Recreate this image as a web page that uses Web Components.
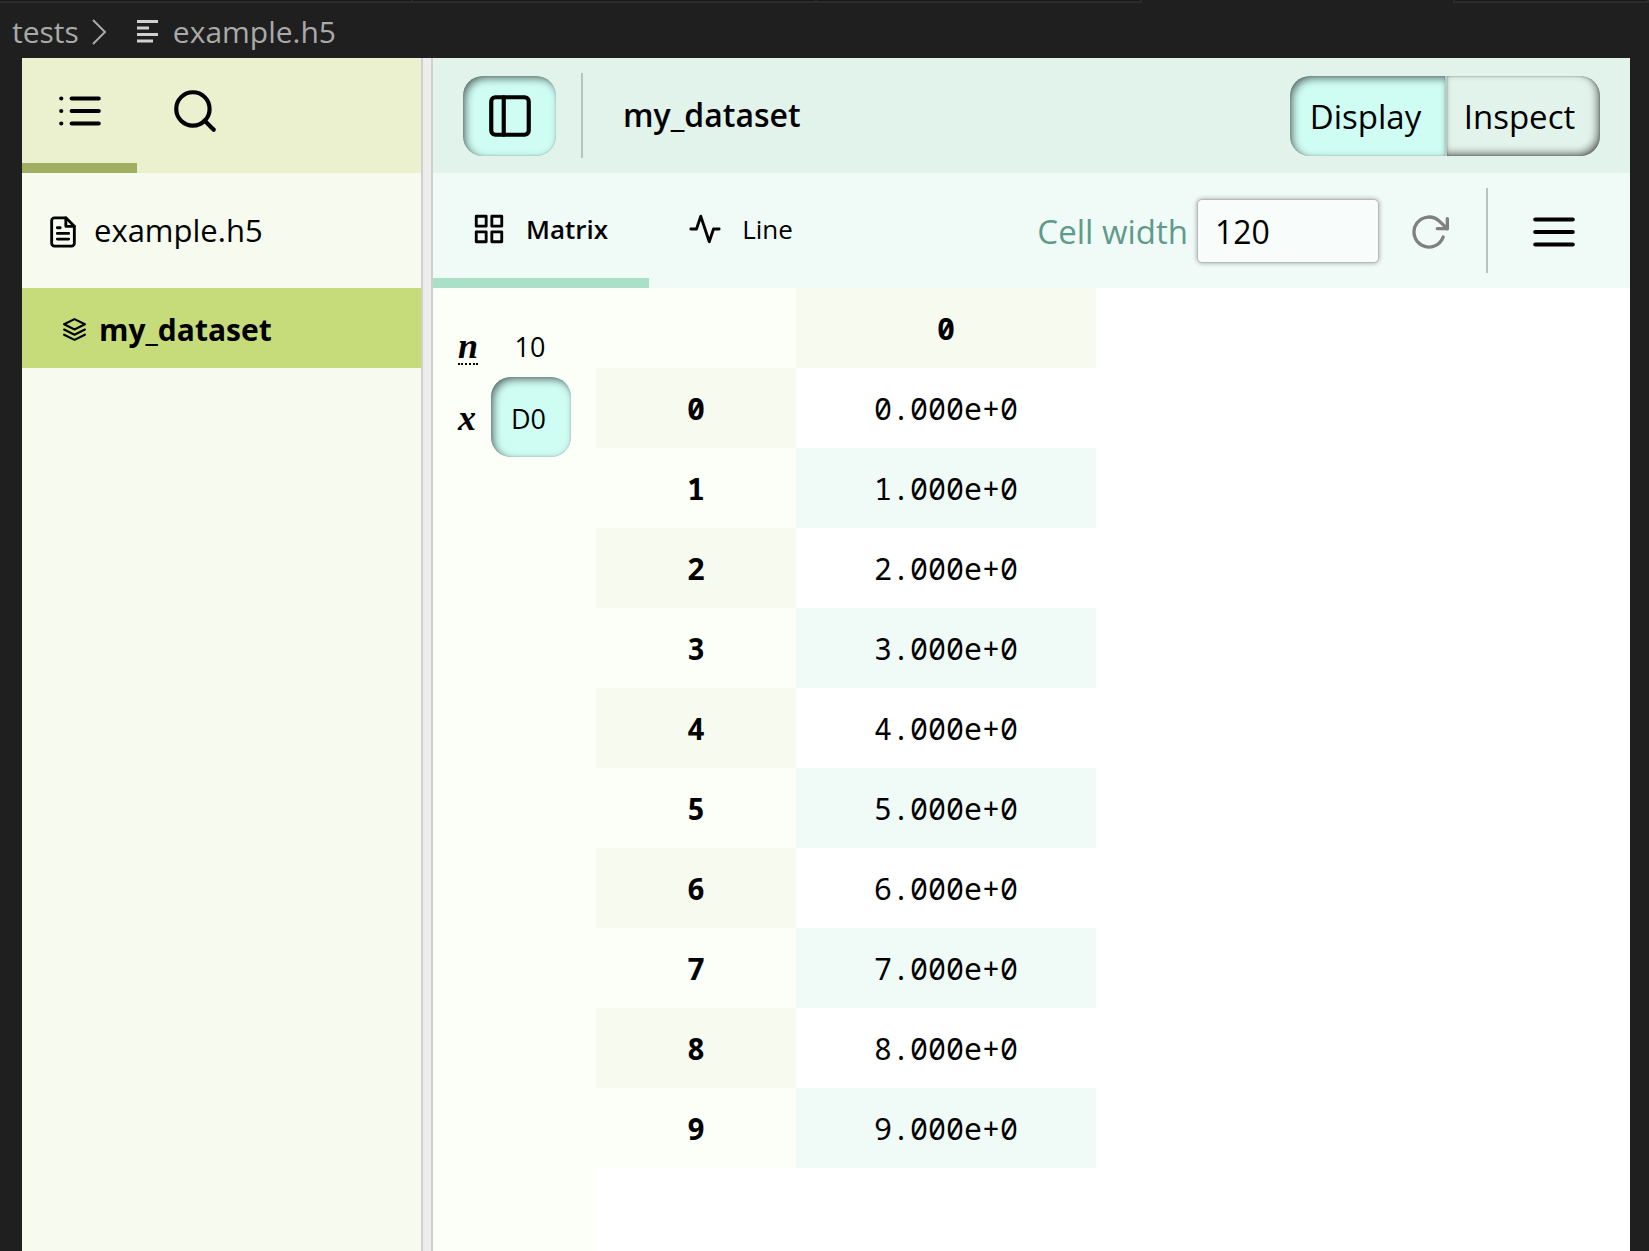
<!DOCTYPE html>
<html lang="en">
<head>
<meta charset="utf-8">
<meta name="viewport" content="width=device-width, initial-scale=1">
<title>example.h5</title>
<style>
html, body { margin: 0; height: 100%; }
body { background: #1f1f1f; color: #000; font-family: "Open Sans", "Noto Sans", sans-serif; font-size: 32px; }
</style>
</head>
<body>
<h5-app></h5-app>
<script>
const RESET = `
  *, *::before, *::after { box-sizing: border-box; }
  button, input { font: inherit; color: inherit; margin: 0; }
  button { border: 0; padding: 0; background: none; cursor: pointer; }
  a { color: inherit; text-decoration: none; }
`;

function define(name, css, html) {
  const template = document.createElement('template');
  template.innerHTML = `<style>${RESET}${css}</style>${html}`;
  customElements.define(name, class extends HTMLElement {
    constructor() {
      super();
      this.attachShadow({ mode: 'open' }).append(template.content.cloneNode(true));
    }
  });
}

/* Stroke icons on a 24-unit grid */
const ICONS = {
  list: '<path d="M8 6h13M8 12h13M8 18h13M3 6h.01M3 12h.01M3 18h.01"/>',
  search: '<circle cx="11" cy="11" r="8"/><path d="M21 21l-4.350-4.350"/>',
  file: '<path d="M14 2H6a2 2 0 0 0-2 2v16a2 2 0 0 0 2 2h12a2 2 0 0 0 2-2V8z"/><path d="M14 2v6h6M16 13H8M16 17H8M10 9H8"/>',
  layers: '<path d="M12 2L2 7l10 5 10-5z"/><path d="M2 17l10 5 10-5M2 12l10 5 10-5"/>',
  sidebar: '<rect x="3" y="3" width="18" height="18" rx="2"/><path d="M9 3v18"/>',
  grid: '<path d="M3 3h7v7H3zM14 3h7v7h-7zM14 14h7v7h-7zM3 14h7v7H3z"/>',
  activity: '<path d="M22 12h-4l-3 9L9 3l-3 9H2"/>',
  refresh: '<path d="M23 4v6h-6"/><path d="M20.490 15a9 9 0 1 1-2.120-9.360L23 10"/>',
  menu: '<path d="M3 12h18M3 6h18M3 18h18"/>',
};
customElements.define('h5-icon', class extends HTMLElement {
  connectedCallback() {
    const size = this.getAttribute('size');
    const root = this.shadowRoot || this.attachShadow({ mode: 'open' });
    root.innerHTML = `<style>:host{display:block;flex:none}svg{display:block}</style>
      <svg width="${size}" height="${size}" viewBox="0 0 24 24" fill="none" stroke="currentColor" stroke-width="2"
      stroke-linecap="round" stroke-linejoin="round" aria-hidden="true">${ICONS[this.getAttribute('name')]}</svg>`;
  }
});

define('h5-breadcrumbs', `
  :host { display: block; height: 58px; color: #a9a9a9; font-size: 30px; line-height: 40px; }
  .strip { display: flex; height: 3px; }
  .strip span { background: #181818; border: solid #2b2b2b; border-width: 0 2px 2px 0; flex: 0 1 404px; }
  .strip .first { flex-basis: 413px; }
  .strip .third { flex-basis: 325px; }
  .strip .active { flex-basis: 313px; background: none; border-bottom: 0; }
  .strip .rest { flex: 1 1 0; }
  nav { display: flex; align-items: center; padding: 9px 12px; }
  svg { display: block; flex: none; fill: none; stroke: currentColor; }
  .chevron { margin-left: 13px; stroke-width: 2; }
  .lines { margin: 0 14px 0 30px; color: #d0d0d0; stroke-width: 3; }
`, `
  <div class="strip"><span class="first"></span><span></span><span class="third"></span><span class="active"></span><span class="rest"></span></div>
  <nav aria-label="Breadcrumb">
    <a href="#tests">tests</a>
    <svg class="chevron" width="15" height="26" viewBox="0 0 15 26"><path d="M1 1l12 12L1 25"/></svg>
    <svg class="lines" width="22" height="24" viewBox="0 0 22 24"><path d="M0 1.500h21M0 8h12M0 14.500h21M0 21h16"/></svg>
    <a href="#example">example.h5</a>
  </nav>
`);

define('h5-sidebar', `
  :host { display: flex; flex-direction: column; background: #f7faef; }
  .tabs { display: flex; height: 115px; background: #ebf1cf; }
  .tabs button { width: 115px; display: grid; place-items: center; border-bottom: 10px solid transparent; }
  .tabs .on { border-color: #9fae60; }
  .file { display: flex; align-items: center; gap: 14px; height: 115px; padding: 3px 24px 0; font-size: 31px; line-height: 36px; font-weight: 500; }
  .file span { padding-bottom: 4px; }
  .item { display: flex; align-items: center; gap: 12px; width: 100%; height: 80px; padding: 2px 40px 0; background: #c6dc7a; font-size: 30px; font-weight: 700; }
`, `
  <div class="tabs" role="tablist">
    <button class="on" role="tab" aria-selected="true" aria-label="Explorer"><h5-icon name="list" size="50"></h5-icon></button>
    <button role="tab" aria-selected="false" aria-label="Search"><h5-icon name="search" size="50"></h5-icon></button>
  </div>
  <a class="file" href="#root"><h5-icon name="file" size="34"></h5-icon><span>example.h5</span></a>
  <button class="item"><h5-icon name="layers" size="25"></h5-icon><span>my_dataset</span></button>
`);

define('h5-separator', `:host { display: block; flex: none; width: 2px; height: 85px; background: #b5c5bd; }`, ``);

define('h5-header', `
  :host { display: flex; align-items: center; height: 115px; padding: 0 30px; background: #e2f3eb; }
  .toggle { display: grid; place-items: center; width: 93px; height: 80px; border-radius: 20px; background: #cffcf3;
    box-shadow: inset 3px 3px 8px -1px #0009, inset 0 0 2px #0003; margin-right: 25px; }
  h1 { flex: 1; margin: 0; padding: 0 0 2px 40px; font-size: 32px; line-height: 44px; font-weight: 600; }
  .group { display: flex; height: 80px; }
  .group button { width: 155px; padding: 2px 4px 0 0; font-size: 33px; border-radius: 20px 0 0 20px; background: #cffcf3;
    box-shadow: inset 3px 3px 8px -1px #0009, inset 0 0 2px #0003; }
  .group button + button { border-radius: 0 20px 20px 0; background: #e2f3eb; border-left: 2px solid #b2cfc6; padding-right: 8px;
    box-shadow: inset -3px -3px 8px -1px #0009, inset 0 0 2px #0006; }
`, `
  <button class="toggle" aria-label="Toggle sidebar" aria-pressed="true"><h5-icon name="sidebar" size="50"></h5-icon></button>
  <h5-separator></h5-separator>
  <h1>my_dataset</h1>
  <div class="group" role="group" aria-label="View">
    <button aria-pressed="true">Display</button><button aria-pressed="false">Inspect</button>
  </div>
`);

define('h5-toolbar', `
  :host { display: flex; align-items: center; height: 115px; background: #f0faf7; }
  .tabs { display: flex; align-self: stretch; flex: 1; }
  .tabs button { display: flex; align-items: center; gap: 20px; padding: 7px 41px 0 39px; border-bottom: 10px solid transparent; font-size: 26px; }
  .tabs .on { font-weight: 600; border-color: #aadfc8; }
  label { color: #5f9b8a; font-size: 33px; margin-right: 9px; padding-top: 2px; }
  input { width: 182px; height: 64px; padding: 2px 17px 0; border: 1px solid #b4bbb8; border-radius: 5px; background: #f8fcfb;
    box-shadow: 0 0 5px #0005; outline: 0; }
  .refresh { color: #808080; margin: 0 37px 0 30px; padding-top: 2px; }
  .menu { margin: 0 51px 0 41px; padding-top: 2px; }
`, `
  <div class="tabs" role="tablist">
    <button class="on" role="tab" aria-selected="true"><h5-icon name="grid" size="34"></h5-icon><span>Matrix</span></button>
    <button role="tab" aria-selected="false"><h5-icon name="activity" size="34"></h5-icon><span>Line</span></button>
  </div>
  <label for="cell-width">Cell width</label>
  <input id="cell-width" type="text" inputmode="numeric" value="120">
  <button class="refresh" aria-label="Reset cell width"><h5-icon name="refresh" size="40"></h5-icon></button>
  <h5-separator></h5-separator>
  <button class="menu" aria-label="More controls"><h5-icon name="menu" size="50"></h5-icon></button>
`);

define('h5-dimensions', `
  :host { display: grid; grid-template-columns: 33px 80px; grid-template-rows: 64px 80px; align-content: start; align-items: center;
    padding: 25px; background: #fcfff7; font-size: 27px; }
  .sym { justify-self: start; padding-top: 2px; font: italic 700 36px/40px "Liberation Serif", serif; }
  abbr { text-decoration: none; border-bottom: 2px dotted #000; }
  abbr.sym { padding-top: 4px; line-height: 34px; }
  .size { text-align: center; padding: 3px 2px 0 0; }
  button { height: 80px; padding: 2px 5px 0 0; border-radius: 20px; background: #cffcf3; box-shadow: inset 3px 3px 8px -1px #0009, inset 0 0 2px #0003; }
`, `
  <abbr class="sym" title="Size of each dimension">n</abbr><span class="size">10</span>
  <span class="sym">x</span><button aria-pressed="true">D0</button>
`);

customElements.define('h5-matrix', class extends HTMLElement {
  connectedCallback() {
    const root = this.shadowRoot || this.attachShadow({ mode: 'open' });
    const rows = Array.from({ length: 10 }, (_, i) => `<tr><th scope="row">${i}</th><td>${i}.000e+0</td></tr>`).join('');
    root.innerHTML = `<style>
      :host { display: block; flex: 1; background: #fff; }
      table { table-layout: fixed; width: 500px; border-collapse: collapse; font: 30px/40px "Noto Sans Mono", "DejaVu Sans Mono", monospace; }
      col:first-child { width: 200px; }
      th, td { box-sizing: border-box; height: 80px; padding: 1px 0 0; text-align: center; }
      thead th, tbody tr:nth-child(odd) th { background: #f7faef; }
      thead td, tbody tr:nth-child(even) th { background: #fcfff7; }
      tbody tr:nth-child(even) td { background: #f0faf7; }
    </style>
    <table><colgroup><col><col></colgroup>
      <thead><tr><td></td><th scope="col">0</th></tr></thead><tbody>${rows}</tbody></table>`;
  }
});

define('h5-app', `
  :host { display: flex; flex-direction: column; min-height: 100%; }
  .frame { flex: 1; display: flex; margin: 0 19px 0 22px; }
  h5-sidebar { flex: 0 0 399px; }
  .splitter { flex: none; width: 12px; background: #ededed; border: solid #cfcfcf; border-width: 0 2px; }
  main { flex: 1; min-width: 0; display: flex; flex-direction: column; }
  .vis { flex: 1; display: flex; }
`, `
  <h5-breadcrumbs></h5-breadcrumbs>
  <div class="frame">
    <h5-sidebar></h5-sidebar>
    <div class="splitter" role="separator" aria-orientation="vertical"></div>
    <main>
      <h5-header></h5-header>
      <h5-toolbar></h5-toolbar>
      <div class="vis"><h5-dimensions></h5-dimensions><h5-matrix></h5-matrix></div>
    </main>
  </div>
`);
</script>
</body>
</html>
